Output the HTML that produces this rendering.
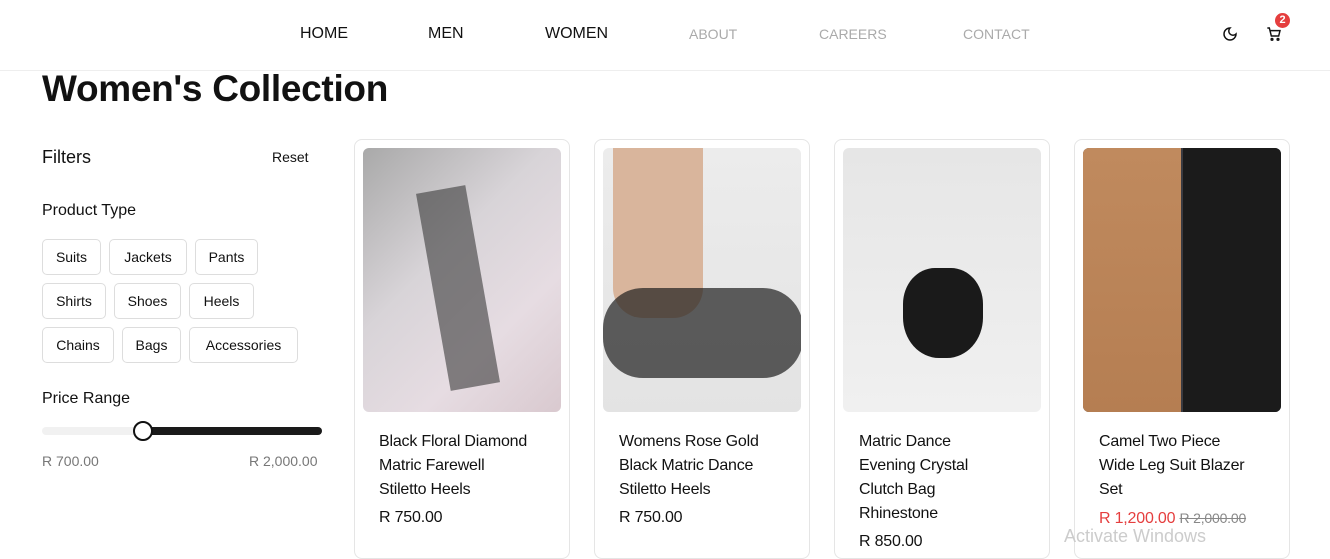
<!DOCTYPE html>
<html><head><style>
*{margin:0;padding:0;box-sizing:border-box}
body{width:1330px;height:538px;overflow:hidden;background:#fff;font-family:"Liberation Sans",sans-serif;color:#111;position:relative}
.nav{position:absolute;top:0;left:0;width:1330px;height:71px;border-bottom:1px solid #eee}
.nav a{position:absolute;top:25px;font-size:16px;color:#111;text-decoration:none}
.nav a.l{color:#aaa;font-size:14px;top:26px}
h1{position:absolute;left:42px;top:68px;font-size:37px;font-weight:bold;letter-spacing:-0.3px}
.f{position:absolute;font-size:16px}
.tag{position:absolute;height:36px;border:1px solid #ddd;border-radius:5px;font-size:14px;line-height:34px;text-align:center}
.card{position:absolute;top:139px;width:216px;height:420px;border:1px solid #e5e5e5;border-radius:8px}
.img{position:absolute;left:8px;top:8px;width:198px;height:264px;border-radius:6px;overflow:hidden}
.t{position:absolute;left:24px;top:290px;font-size:16px;line-height:24px;width:190px;white-space:nowrap;letter-spacing:-0.2px}
.p{font-size:16px;margin-top:4px}
</style></head><body>
<div class="nav">
<a style="left:300px">HOME</a><a style="left:428px">MEN</a><a style="left:545px">WOMEN</a>
<a class="l" style="left:689px">ABOUT</a><a class="l" style="left:819px">CAREERS</a><a class="l" style="left:963px">CONTACT</a>
<svg style="position:absolute;left:1222px;top:26px" width="16" height="16" viewBox="0 0 24 24" fill="none" stroke="#111" stroke-width="2.2"><path d="M12 3a6 6 0 0 0 9 9 9 9 0 1 1-9-9z"/></svg>
<svg style="position:absolute;left:1266px;top:26px" width="16" height="16" viewBox="0 0 24 24" fill="none" stroke="#111" stroke-width="2.2"><path d="M2 3h3l3 12h11l2-8H7"/><circle cx="9" cy="20" r="1.3"/><circle cx="18" cy="20" r="1.3"/></svg>
<div style="position:absolute;left:1275px;top:13px;width:15px;height:15px;border-radius:50%;background:#e53e3e;color:#fff;font-size:11px;font-weight:bold;text-align:center;line-height:15px">2</div>
</div>
<h1>Women's Collection</h1>
<div class="f" style="left:42px;top:147px;font-size:18px">Filters</div>
<div class="f" style="left:272px;top:149px;font-size:14px">Reset</div>
<div class="f" style="left:42px;top:202px">Product Type</div>
<div class="tag" style="left:42px;top:239px;width:59px">Suits</div>
<div class="tag" style="left:109px;top:239px;width:78px">Jackets</div>
<div class="tag" style="left:195px;top:239px;width:63px">Pants</div>
<div class="tag" style="left:42px;top:283px;width:64px">Shirts</div>
<div class="tag" style="left:114px;top:283px;width:67px">Shoes</div>
<div class="tag" style="left:189px;top:283px;width:65px">Heels</div>
<div class="tag" style="left:42px;top:327px;width:72px">Chains</div>
<div class="tag" style="left:122px;top:327px;width:59px">Bags</div>
<div class="tag" style="left:189px;top:327px;width:109px">Accessories</div>
<div class="f" style="left:42px;top:390px">Price Range</div>
<div style="position:absolute;left:42px;top:427px;width:280px;height:8px;border-radius:4px;background:#f1f1f1"></div>
<div style="position:absolute;left:142px;top:427px;width:180px;height:8px;border-radius:4px;background:#1a1a1a"></div>
<div style="position:absolute;left:133px;top:421px;width:20px;height:20px;border-radius:50%;background:#fff;border:2px solid #111"></div>
<div class="f" style="left:42px;top:453px;font-size:14px;color:#777">R 700.00</div>
<div class="f" style="left:249px;top:453px;font-size:14px;color:#777">R 2,000.00</div>

<div class="card" style="left:354px"><div class="img" style="background:linear-gradient(135deg,#a9a9a9,#d8d4d8 40%,#e6dce2 70%,#d9c9cf)"><div style="position:absolute;left:70px;top:40px;width:50px;height:200px;background:#3a3a3a;opacity:.6;transform:rotate(-10deg)"></div></div>
<div class="t">Black Floral Diamond<br>Matric Farewell<br>Stiletto Heels<div class="p">R 750.00</div></div></div>
<div class="card" style="left:594px"><div class="img" style="background:linear-gradient(180deg,#ececec,#e3e3e3)"><div style="position:absolute;left:10px;top:0;width:90px;height:170px;background:#d9b59c;border-radius:0 0 30px 30px"></div><div style="position:absolute;left:0;top:140px;width:200px;height:90px;background:#1e1e1e;opacity:.7;border-radius:40px"></div></div>
<div class="t">Womens Rose Gold<br>Black Matric Dance<br>Stiletto Heels<div class="p">R 750.00</div></div></div>
<div class="card" style="left:834px"><div class="img" style="background:linear-gradient(180deg,#e6e6e6,#f0f0f0)"><div style="position:absolute;left:60px;top:120px;width:80px;height:90px;background:#1a1a1a;border-radius:40% 40% 45% 45%"></div></div>
<div class="t">Matric Dance<br>Evening Crystal<br>Clutch Bag<br>Rhinestone<div class="p">R 850.00</div></div></div>
<div class="card" style="left:1074px"><div class="img" style="background:#3a3a40"><div style="position:absolute;left:0;top:0;width:98px;height:264px;background:linear-gradient(#c08a5e,#b57e52)"></div><div style="position:absolute;left:100px;top:0;width:98px;height:264px;background:#1b1b1b"></div></div>
<div class="t">Camel Two Piece<br>Wide Leg Suit Blazer<br>Set<div class="p"><span style="color:#e53e3e">R 1,200.00</span> <span style="color:#888;text-decoration:line-through;font-size:14px">R 2,000.00</span></div></div></div>
<div style="position:absolute;left:1064px;top:526px;font-size:18px;color:#ccc">Activate Windows</div>
</body></html>
